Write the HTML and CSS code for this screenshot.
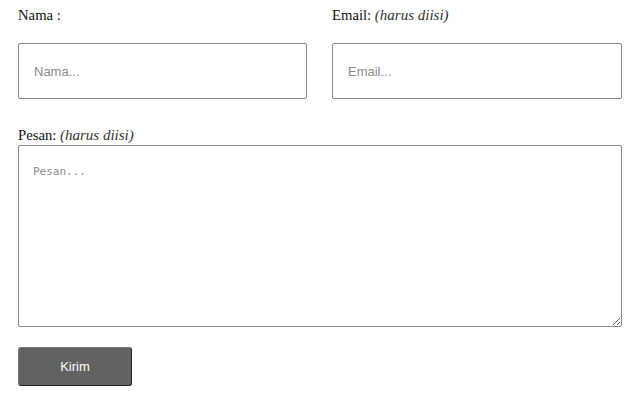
FILE: index.html
```html
<!DOCTYPE html>
<html>
<head>
<meta charset="utf-8">
<link rel="stylesheet" href="styles.css">
</head>
<body>
<form class="form">
  <div class="row">
    <div class="field">
      <label class="label">Nama :</label>
      <input class="input" type="text" placeholder="Nama...">
    </div>
    <div class="field">
      <label class="label">Email: <em>(harus diisi)</em></label>
      <input class="input" type="text" placeholder="Email...">
    </div>
  </div>
  <label class="label label-msg">Pesan: <em>(harus diisi)</em></label>
  <textarea class="textarea" placeholder="Pesan..."></textarea>
  <button class="btn" type="button">Kirim</button>
</form>
</body>
</html>
```
FILE: styles.css
```css
html, body {
  margin: 0;
  padding: 0;
  background: #fff;
}
body {
  font-family: "Liberation Serif", "Times New Roman", serif;
  color: #111;
}
.form {
  width: 604px;
  padding: 7px 0 0 18px;
  display: flex;
  flex-direction: column;
}
.row {
  display: grid;
  grid-template-columns: 289px 290px;
  column-gap: 25px;
}
.field {
  display: flex;
  flex-direction: column;
}
.label {
  font-size: 14.7px;
  line-height: 16px;
  display: block;
}
.label em {
  color: #333;
  font-size: 15px;
}
.input {
  margin-top: 20px;
  box-sizing: border-box;
  height: 56px;
  width: 100%;
  border: 1px solid #888;
  border-radius: 2px;
  padding: 0 15px;
  font-family: "Liberation Sans", Arial, sans-serif;
  font-size: 13px;
  color: #333;
  outline: none;
}
.input::placeholder {
  color: #8a8a8a;
}
.label-msg {
  margin-top: 28px;
}
.textarea {
  margin-top: 2px;
  box-sizing: border-box;
  width: 604px;
  height: 182px;
  border: 1px solid #888;
  border-radius: 2px;
  padding: 19px 14px;
  font-family: "DejaVu Sans Mono", "Liberation Mono", monospace;
  font-size: 11px;
  outline: none;
}
.textarea::placeholder {
  color: #8a8a8a;
}
.btn {
  margin-top: 20px;
  width: 114px;
  height: 39px;
  box-sizing: border-box;
  background: #626262;
  color: #fff;
  border: 1px solid #777;
  border-right-color: #222;
  border-bottom-color: #222;
  border-radius: 3px;
  font-family: "Liberation Sans", Arial, sans-serif;
  font-size: 13px;
  padding: 0;
  cursor: pointer;
}
```
